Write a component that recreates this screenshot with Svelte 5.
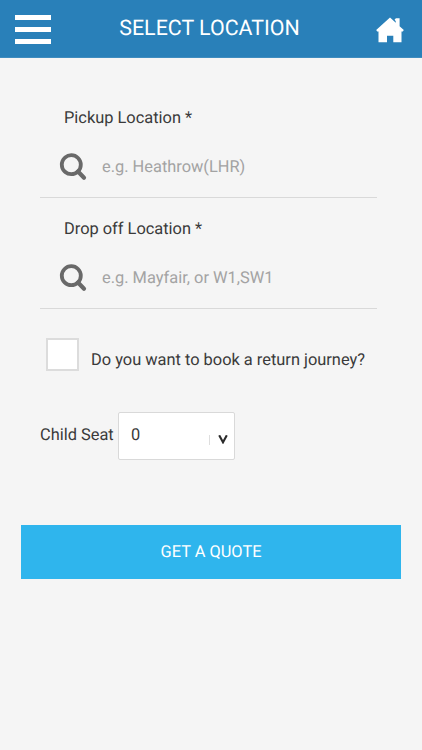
<script lang="ts">
    const fields = [
        { id: 'pickup', label: 'Pickup Location *', placeholder: 'e.g. Heathrow(LHR)' },
        { id: 'dropoff', label: 'Drop off Location *', placeholder: 'e.g. Mayfair, or W1,SW1' }
    ]

    let values = $state({ pickup: '', dropoff: '' })
    let returnJourney = $state(false)
    let childSeats = $state(0)
</script>

<div class="screen">
    <header>
        <button type="button" class="menu" aria-label="Menu">
            <span></span>
            <span></span>
            <span></span>
        </button>
        <h1>SELECT LOCATION</h1>
        <button type="button" class="home" aria-label="Home">
            <svg width="28" height="26" viewBox="0 0 28 26">
                <path fill="#fff" d="M14 0.5 L19.8 5.8 V4.4 L18.6 2.2 L20.2 1.2 H23.6 V9.2 L27.8 13 L26.8 14.6 H25.5 V25.2 H17.3 V18.8 H11 V25.2 H2.5 V14.6 H1.2 L0.2 13 Z" />
            </svg>
        </button>
    </header>

    <form onsubmit={(e) => e.preventDefault()}>
        {#each fields as field}
            <div class="field">
                <label for={field.id}>{field.label}</label>
                <div class="search">
                    <svg width="28" height="28" viewBox="0 0 28 28">
                        <g fill="none" stroke="#696969">
                            <circle cx="12.3" cy="11.7" r="9.5" stroke-width="3.8" />
                            <path d="M19 18.5 L25 24.7" stroke-width="4.2" stroke-linecap="round" />
                        </g>
                    </svg>
                    <input id={field.id} type="text" placeholder={field.placeholder} bind:value={values[field.id]} />
                </div>
            </div>
        {/each}

        <label class="return">
            <input type="checkbox" bind:checked={returnJourney} />
            <span>Do you want to book a return journey?</span>
        </label>

        <div class="seats">
            <label for="seats">Child Seat</label>
            <div class="select">
                <select id="seats" bind:value={childSeats}>
                    {#each [0, 1, 2, 3] as count}
                        <option value={count}>{count}</option>
                    {/each}
                </select>
                <div class="arrow">
                    <svg width="10" height="9" viewBox="0 0 10 9">
                        <path fill="none" stroke="#2b2b2b" stroke-width="2.1" d="M1.2 0.3 L5 7.3 L8.8 0.3" />
                    </svg>
                </div>
            </div>
        </div>

        <button type="submit" class="quote">GET A QUOTE</button>
    </form>
</div>

<style>
    :global(body) {
        background: #f5f5f5;
    }
    .screen {
        min-height: 750px;
        box-sizing: border-box;
        background: #f5f5f5;
        color: #3a3a3a;
        font-family: Roboto, sans-serif;
        font-size: 16.4px;
        line-height: 24px;
        text-rendering: geometricPrecision;
    }
    button, input, select {
        font: inherit;
        color: inherit;
        margin: 0;
        padding: 0;
        border: none;
        outline: none;
        border-radius: 0;
        background: none;
        text-rendering: inherit;
    }
    header {
        display: flex;
        align-items: center;
        height: 58px;
        box-sizing: border-box;
        padding: 0 18px 0 15px;
        background: #2980b9;
        border-bottom: 1px solid #3f8cbf;
        color: #fff;
    }
    h1 {
        flex: 1;
        margin: 0;
        padding-right: 8px;
        font-size: 21.4px;
        font-weight: 400;
        line-height: 28px;
        text-align: center;
    }
    .menu {
        display: flex;
        flex-direction: column;
        gap: 7px;
        width: 36px;
        margin-top: 1px;
    }
    .menu span {
        height: 5px;
        background: #fff;
    }
    .home {
        display: flex;
        margin-top: 3px;
    }
    form {
        padding: 49px 21px 0;
    }
    .field {
        height: 111px;
        margin: 0 24px 0 19px;
    }
    .field > label {
        display: block;
        padding-left: 24px;
    }
    .search {
        display: flex;
        align-items: center;
        height: 67px;
        box-sizing: border-box;
        padding: 6px 0 0 19px;
        border-bottom: 1px solid #d9d9d9;
    }
    .search input {
        flex: 1;
        min-width: 0;
        margin-left: 15px;
        padding-top: 2px;
    }
    .search svg {
        margin-bottom: 1px;
    }
    .search input::placeholder {
        color: #a3a3a3;
        opacity: 1;
    }
    .return {
        display: flex;
        align-items: flex-start;
        margin: 9px 0 0 25px;
    }
    .return input {
        appearance: none;
        width: 33px;
        height: 33px;
        border: 2px solid #dcdcdc;
        background: #fff;
    }
    .return input:checked {
        background: #2fb5ed;
    }
    .return span {
        margin: 11px 0 0 12px;
        white-space: nowrap;
    }
    .seats {
        display: flex;
        align-items: center;
        margin: 39px 0 0 19px;
    }
    .seats label {
        width: 78px;
        margin-bottom: 1px;
    }
    .select {
        display: flex;
        align-items: center;
        width: 117px;
        height: 48px;
        box-sizing: border-box;
        border: 1px solid #d9d9d9;
        border-radius: 2px;
        background: #fff;
    }
    select {
        appearance: none;
        flex: 1;
        height: 46px;
        padding: 0 0 0 12px;
    }
    .arrow {
        display: flex;
        align-items: center;
        height: 10px;
        margin: 7px 6px 0 0;
        padding-left: 8px;
        border-left: 1px solid #dedede;
    }
    .quote {
        display: block;
        width: 380px;
        height: 54px;
        margin-top: 65px;
        padding-top: 2px;
        background: #2fb5ed;
        color: #fff;
        font-size: 16.4px;
        text-align: center;
    }
</style>
